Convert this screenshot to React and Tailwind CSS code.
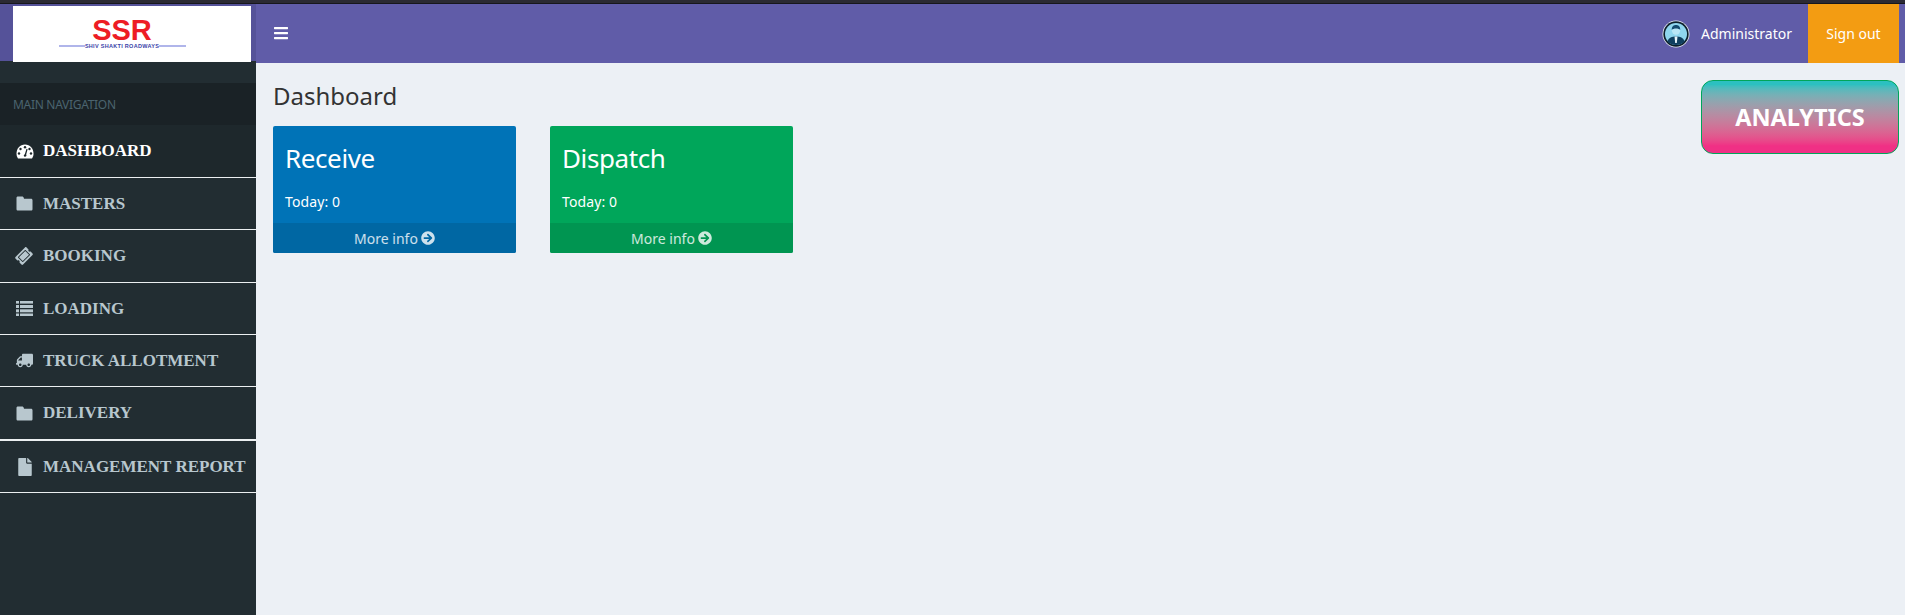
import React from 'react';
import { FaBars, FaTicketAlt, FaTruck, FaFile, FaArrowCircleRight } from 'react-icons/fa';

// FA4 style icons that the package draws differently
function GaugeIcon() {
  return (
    <svg width="18" height="15" viewBox="0 0 18 15" fill="currentColor">
      <path d="M9 0.5 C4 0.5 0.5 4.5 0.5 9.5 C0.5 11.5 1 13 2 14.5 L16 14.5 C17 13 17.5 11.5 17.5 9.5 C17.5 4.5 14 0.5 9 0.5 Z" />
      <g fill="#1e282c">
        <circle cx="4.5" cy="5" r="1.2" />
        <circle cx="9" cy="3.2" r="1.2" />
        <circle cx="13.5" cy="5" r="1.2" />
        <circle cx="3" cy="9.5" r="1.2" />
        <circle cx="15" cy="9.5" r="1.2" />
        <path d="M10.5 4.8 L11.6 5.2 L10.2 10.5 C10.8 11.4 10.4 12.8 9 12.8 C7.6 12.8 7.2 10.8 8.8 10.2 Z" />
      </g>
    </svg>
  );
}

function FolderIcon() {
  return (
    <svg width="17" height="15" viewBox="0 0 17 15" fill="currentColor">
      <path d="M2 0.5 L6 0.5 C7 0.5 7.5 1 7.8 2 L8 2.7 L15 2.7 C16 2.7 16.5 3.4 16.5 4.2 L16.5 13 C16.5 14 16 14.5 15 14.5 L2 14.5 C1 14.5 0.5 14 0.5 13 L0.5 2 C0.5 1 1 0.5 2 0.5 Z" />
    </svg>
  );
}

function ListIcon() {
  return (
    <svg width="17" height="15" viewBox="0 0 17 15" fill="currentColor">
      <rect x="0" y="0" width="3" height="2.6" />
      <rect x="4" y="0" width="13" height="2.6" />
      <rect x="0" y="4" width="3" height="3" />
      <rect x="4" y="4" width="13" height="3" />
      <rect x="0" y="8.3" width="3" height="3" />
      <rect x="4" y="8.3" width="13" height="3" />
      <rect x="0" y="12.5" width="3" height="2.5" />
      <rect x="4" y="12.5" width="13" height="2.5" />
    </svg>
  );
}

const TicketIcon = () => <FaTicketAlt className="text-[16px] -rotate-45" />;
const TruckIcon = () => <FaTruck className="text-[17px] -scale-x-100" />;
const FileIcon = () => <FaFile className="text-[18px]" />;

const navItems = [
  { label: 'DASHBOARD', Icon: GaugeIcon, active: true, row: 'h-[53px] border-b' },
  { label: 'MASTERS', Icon: FolderIcon, row: 'h-[52px] border-b' },
  { label: 'BOOKING', Icon: TicketIcon, row: 'h-[53px] border-b' },
  { label: 'LOADING', Icon: ListIcon, row: 'h-[52px] border-b' },
  { label: 'TRUCK ALLOTMENT', Icon: TruckIcon, row: 'h-[52px] border-b' },
  { label: 'DELIVERY', Icon: FolderIcon, row: 'h-[54px] border-b-2' },
  { label: 'MANAGEMENT REPORT', Icon: FileIcon, row: 'h-[52px] border-b' },
];

function Logo() {
  return (
    <div className="w-[238px] h-[56px] bg-white flex flex-col items-center pr-[20px] overflow-hidden">
      <div className="font-['Liberation_Sans',sans-serif] font-bold text-[29px] leading-[28px] mt-[10px] text-[#ed1c24]">SSR</div>
      <div className="w-[127px] flex items-center mt-[-1px]">
        <div className="flex-1 h-[2px] bg-[#b0b5ea]"></div>
        <div className="font-['Liberation_Sans',sans-serif] font-bold text-[5.5px] leading-[6px] tracking-[0.3px] text-[#3a3fa8] whitespace-nowrap">SHIV SHAKTI ROADWAYS</div>
        <div className="flex-1 h-[2px] bg-[#b0b5ea]"></div>
      </div>
    </div>
  );
}

function Avatar() {
  return (
    <svg width="28" height="28" viewBox="0 0 28 28" className="shrink-0">
      <circle cx="14" cy="14" r="13.5" fill="#e8eef5" />
      <circle cx="14" cy="14" r="12.7" fill="#0d1f2c" />
      <circle cx="14" cy="14" r="11" fill="#8fd6ee" />
      <path d="M5.5 21.5 C6.5 17.5 10 16.5 14 16.5 C18 16.5 21.5 17.5 22.5 21.5 C19 26 9 26 5.5 21.5 Z" fill="#0f3f5f" />
      <circle cx="14" cy="10.5" r="4.2" fill="#b9e6f5" />
      <path d="M9.8 10 C9.5 6 12 5 14 5 C16 5 18.5 6 18.2 10 C17 8 11 8 9.8 10 Z" fill="#134a6e" />
      <path d="M12.5 16.5 L15.5 16.5 L14.8 23 L13.2 23 Z" fill="#e8f6fb" />
    </svg>
  );
}

function StatCard({ title, bg, footer }) {
  return (
    <div className={`w-[243px] h-[127px] rounded-[2px] text-white flex flex-col overflow-hidden ${bg}`}>
      <div className="flex-1 px-[12px]">
        <div className="text-[26px] leading-[32px] mt-[16px] tracking-[-0.4px]">{title}</div>
        <div className="text-[14px] leading-[20px] mt-[18px] tracking-[0.1px]">Today: 0</div>
      </div>
      <div className={`h-[30px] flex items-center justify-center gap-[3px] text-[14px] text-white/80 ${footer}`}>
        More info <FaArrowCircleRight className="text-[14px]" />
      </div>
    </div>
  );
}

export default function App() {
  return (
    <div className="h-screen flex flex-col overflow-hidden bg-[#ecf0f5] font-['Noto_Sans',sans-serif]">
      {/* top strip */}
      <div className="h-[4px] shrink-0 bg-[#2b2a33] border-b border-[#17171c]"></div>

      {/* navbar */}
      <header className="h-[59px] shrink-0 flex bg-[#605ca8]">
        <div className="w-[256px] shrink-0 bg-[#222d32]">
          <div className="h-[57px] bg-[#555299] pl-[13px] pt-[2px]">
            <Logo />
          </div>
        </div>
        <div className="w-[17px]"></div>
        <FaBars className="text-white text-[16px] mt-[21px]" />
        <div className="flex-1"></div>
        <div className="flex items-center gap-[11px] mr-[16px]">
          <Avatar />
          <span className="text-[14px] text-white">Administrator</span>
        </div>
        <div className="w-[91px] bg-[#f39c12] text-white text-[14px] flex items-center justify-center mr-[6px]">Sign out</div>
      </header>

      <div className="flex-1 flex min-h-0">
        {/* sidebar */}
        <aside className="w-[256px] shrink-0 bg-[#222d32] pt-[20px]">
          <div className="h-[42px] bg-[#1a2226] pl-[13px] pt-[1px] flex items-center text-[12px] tracking-[-0.3px] text-[#4b646f]">MAIN NAVIGATION</div>
          {navItems.map(({ label, Icon, active, row }) => (
            <div
              key={label}
              className={`flex items-center pl-[16px] font-['Liberation_Serif',serif] font-bold text-[17px] border-[#eceff1] ${row} ${active ? 'bg-[#1e282c] text-white' : 'text-[#b8c7ce]'}`}
            >
              <span className="w-[27px] shrink-0"><Icon /></span>
              <span className="whitespace-nowrap">{label}</span>
            </div>
          ))}
        </aside>

        {/* content */}
        <main className="flex-1 flex justify-between pl-[17px] pr-[6px]">
          <div>
            <h1 className="text-[24px] leading-[28px] text-[#333] mt-[19px] mb-[16px]">Dashboard</h1>
            <div className="flex gap-[34px]">
              <StatCard title="Receive" bg="bg-[#0073b7]" footer="bg-[#0067a3]" />
              <StatCard title="Dispatch" bg="bg-[#00a65a]" footer="bg-[#009551]" />
            </div>
          </div>
          <div className="w-[198px] h-[74px] mt-[17px] pt-[2px] rounded-[12px] border border-[#00a65a] bg-gradient-to-b from-[#2cc0c0] from-[5%] to-[#f03085] to-[90%] flex items-center justify-center text-white font-bold text-[23.5px]">
            ANALYTICS
          </div>
        </main>
      </div>
    </div>
  );
}
